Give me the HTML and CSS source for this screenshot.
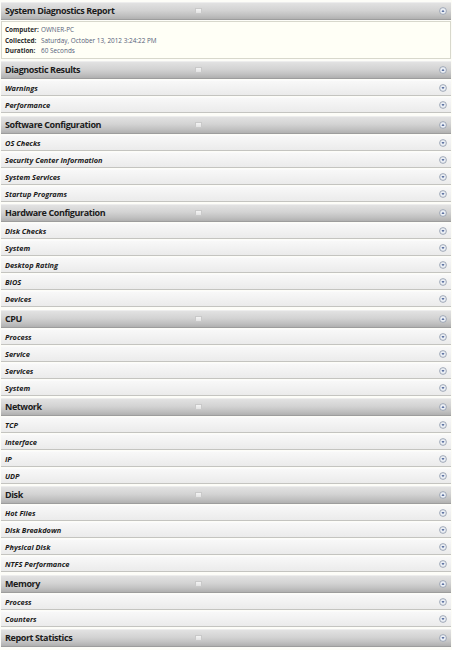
FILE: index.html
```html
<!DOCTYPE html>
<html>
<head>
<meta charset="utf-8">
<link rel="stylesheet" href="styles.css">
</head>
<body>
<svg width="0" height="0" class="defs">
  <defs>
    <symbol id="tg-up" viewBox="0 0 8 8">
      <circle cx="4" cy="4" r="3.4" fill="#eaeef4" stroke="#8e98a8" stroke-width="0.8"/>
      <path d="M2.5 4.8 L4 3 L5.5 4.8 Z" fill="#2e4a86"/>
    </symbol>
    <symbol id="tg-down" viewBox="0 0 8 8">
      <circle cx="4" cy="4" r="3.4" fill="#eaeef4" stroke="#8e98a8" stroke-width="0.8"/>
      <path d="M2.5 3.2 L4 5 L5.5 3.2 Z" fill="#2e4a86"/>
    </symbol>
  </defs>
</svg>
<div class="report">
  <div class="head"><span class="title">System Diagnostics Report</span><span class="grip"></span><svg class="tg"><use href="#tg-up"/></svg></div>
  <div class="info">
    <table>
      <tr><td class="lbl">Computer:</td><td class="val">OWNER-PC</td></tr>
      <tr><td class="lbl">Collected:</td><td class="val">Saturday, October 13, 2012 3:24:22 PM</td></tr>
      <tr><td class="lbl">Duration:</td><td class="val">60 Seconds</td></tr>
    </table>
  </div>

  <div class="head"><span class="title">Diagnostic Results</span><span class="grip"></span><svg class="tg"><use href="#tg-up"/></svg></div>
  <div class="row"><span class="name">Warnings</span><svg class="tg"><use href="#tg-down"/></svg></div>
  <div class="row"><span class="name">Performance</span><svg class="tg"><use href="#tg-down"/></svg></div>

  <div class="head"><span class="title">Software Configuration</span><span class="grip"></span><svg class="tg"><use href="#tg-up"/></svg></div>
  <div class="row"><span class="name">OS Checks</span><svg class="tg"><use href="#tg-down"/></svg></div>
  <div class="row"><span class="name">Security Center Information</span><svg class="tg"><use href="#tg-down"/></svg></div>
  <div class="row"><span class="name">System Services</span><svg class="tg"><use href="#tg-down"/></svg></div>
  <div class="row"><span class="name">Startup Programs</span><svg class="tg"><use href="#tg-down"/></svg></div>

  <div class="head"><span class="title">Hardware Configuration</span><span class="grip"></span><svg class="tg"><use href="#tg-up"/></svg></div>
  <div class="row"><span class="name">Disk Checks</span><svg class="tg"><use href="#tg-down"/></svg></div>
  <div class="row"><span class="name">System</span><svg class="tg"><use href="#tg-down"/></svg></div>
  <div class="row"><span class="name">Desktop Rating</span><svg class="tg"><use href="#tg-down"/></svg></div>
  <div class="row"><span class="name">BIOS</span><svg class="tg"><use href="#tg-down"/></svg></div>
  <div class="row"><span class="name">Devices</span><svg class="tg"><use href="#tg-down"/></svg></div>

  <div class="head"><span class="title">CPU</span><span class="grip"></span><svg class="tg"><use href="#tg-up"/></svg></div>
  <div class="row"><span class="name">Process</span><svg class="tg"><use href="#tg-down"/></svg></div>
  <div class="row"><span class="name">Service</span><svg class="tg"><use href="#tg-down"/></svg></div>
  <div class="row"><span class="name">Services</span><svg class="tg"><use href="#tg-down"/></svg></div>
  <div class="row"><span class="name">System</span><svg class="tg"><use href="#tg-down"/></svg></div>

  <div class="head"><span class="title">Network</span><span class="grip"></span><svg class="tg"><use href="#tg-up"/></svg></div>
  <div class="row"><span class="name">TCP</span><svg class="tg"><use href="#tg-down"/></svg></div>
  <div class="row"><span class="name">Interface</span><svg class="tg"><use href="#tg-down"/></svg></div>
  <div class="row"><span class="name">IP</span><svg class="tg"><use href="#tg-down"/></svg></div>
  <div class="row"><span class="name">UDP</span><svg class="tg"><use href="#tg-down"/></svg></div>

  <div class="head"><span class="title">Disk</span><span class="grip"></span><svg class="tg"><use href="#tg-up"/></svg></div>
  <div class="row"><span class="name">Hot Files</span><svg class="tg"><use href="#tg-down"/></svg></div>
  <div class="row"><span class="name">Disk Breakdown</span><svg class="tg"><use href="#tg-down"/></svg></div>
  <div class="row"><span class="name">Physical Disk</span><svg class="tg"><use href="#tg-down"/></svg></div>
  <div class="row"><span class="name">NTFS Performance</span><svg class="tg"><use href="#tg-down"/></svg></div>

  <div class="head"><span class="title">Memory</span><span class="grip"></span><svg class="tg"><use href="#tg-up"/></svg></div>
  <div class="row"><span class="name">Process</span><svg class="tg"><use href="#tg-down"/></svg></div>
  <div class="row"><span class="name">Counters</span><svg class="tg"><use href="#tg-down"/></svg></div>

  <div class="head"><span class="title">Report Statistics</span><span class="grip"></span><svg class="tg"><use href="#tg-down"/></svg></div>
</div>
</body>
</html>
```

FILE: styles.css
```css
html, body {
  margin: 0;
  padding: 0;
  background: #fdfdf8;
}
body {
  font-family: "Open Sans", "Noto Sans", "DejaVu Sans", sans-serif;
  color: #1e1e1e;
}
.defs {
  position: absolute;
  width: 0;
  height: 0;
}
.report {
  display: flex;
  flex-direction: column;
  padding: 2px 1px 0 1px;
}
.head {
  display: grid;
  grid-template-columns: 190px 8px 1fr 8px;
  align-items: center;
  height: 16px;
  margin: 1.4px 0 1px 0;
  padding: 0 4px 0 4px;
  border-top: 1px solid #ededed;
  border-bottom: 1px solid #9d9d9d;
  background: linear-gradient(#e2e2e2 0%, #d3d3d3 45%, #c2c2c2 75%, #b0b0b0 100%);
}
.report > .head:first-child {
  margin-top: 0;
}
.title {
  font-weight: 700;
  font-size: 9px;
  line-height: 16px;
  color: #1c1c1c;
  white-space: nowrap;
  letter-spacing: -0.4px;
}
.grip {
  grid-column: 2;
  width: 7px;
  height: 6px;
  box-sizing: border-box;
  border: 1px solid #c9c9c9;
  background: linear-gradient(#f4f4f4, #e2e2e2);
}
.head .tg {
  grid-column: 4;
}
.tg {
  width: 8px;
  height: 8px;
  display: block;
}
.info {
  background: #fffff6;
  border: 1px solid #d8d8cc;
  height: 38px;
  padding: 3px 0 0 3px;
  box-sizing: border-box;
  margin-bottom: 1px;
}
.info table {
  border-collapse: collapse;
  font-size: 6.4px;
}
.info td {
  padding: 0;
  height: 10.4px;
  line-height: 10px;
  white-space: nowrap;
}
.lbl {
  font-weight: 700;
  color: #2a2a2a;
  padding-right: 2px !important;
  width: 34px;
}
.val {
  color: #556078;
}
.row {
  display: flex;
  align-items: center;
  justify-content: space-between;
  height: 14px;
  margin-bottom: 1px;
  padding: 0 4px 0 4px;
  border-top: 1px solid #fbfbfb;
  border-bottom: 1px solid #c4c4c0;
  background: linear-gradient(#f8f8f8, #ebebeb);
}
.name {
  font-weight: 700;
  font-style: italic;
  font-size: 7.4px;
  line-height: 14px;
  color: #1a1a1a;
  white-space: nowrap;
}
```
